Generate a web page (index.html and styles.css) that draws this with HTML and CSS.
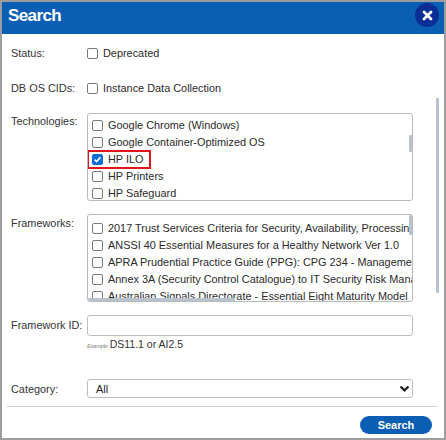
FILE: index.html
```html
<!DOCTYPE html>
<html>
<head>
<meta charset="utf-8">
<link rel="stylesheet" href="styles.css">
</head>
<body>
<div class="dialog">
  <div class="hdr">
    <div class="title">Search</div>
    <button class="close" aria-label="Close"><svg width="11" height="11" viewBox="0 0 11 11"><path d="M2 2L9 9M9 2L2 9" stroke="#fff" stroke-width="2.8" stroke-linecap="round"/></svg></button>
  </div>
  <div class="body">
    <div class="row r-status">
      <div class="lbl">Status:</div>
      <label class="chk"><span class="cb"></span>Deprecated</label>
    </div>
    <div class="row r-db">
      <div class="lbl">DB OS CIDs:</div>
      <label class="chk"><span class="cb"></span>Instance Data Collection</label>
    </div>
    <div class="row r-tech top">
      <div class="lbl">Technologies:</div>
      <div class="lst lst-tech">
        <label class="it"><span class="cb"></span>Google Chrome (Windows)</label>
        <label class="it"><span class="cb"></span>Google Container-Optimized OS</label>
        <label class="it hl"><span class="cb on"><svg width="9" height="9" viewBox="0 0 9 9"><path d="M1.6 4.6L3.6 6.6L7.5 2.2" fill="none" stroke="#fff" stroke-width="1.7"/></svg></span>HP ILO</label>
        <label class="it"><span class="cb"></span>HP Printers</label>
        <label class="it"><span class="cb"></span>HP Safeguard</label>
        <div class="thumb-v tech-thumb"></div>
      </div>
    </div>
    <div class="row r-fw top">
      <div class="lbl">Frameworks:</div>
      <div class="lst lst-fw">
        <label class="it"><span class="cb"></span>2017 Trust Services Criteria for Security, Availability, Processing Integrity, Confidentiality, and Privacy</label>
        <label class="it"><span class="cb"></span>ANSSI 40 Essential Measures for a Healthy Network Ver 1.0</label>
        <label class="it"><span class="cb"></span>APRA Prudential Practice Guide (PPG): CPG 234 - Management of Security Risk in Information and Information Technology</label>
        <label class="it"><span class="cb"></span>Annex 3A (Security Control Catalogue) to IT Security Risk Management: A Lifecycle Approach</label>
        <label class="it"><span class="cb"></span>Australian Signals Directorate - Essential Eight Maturity Model</label>
        <div class="thumb-v fw-thumb"></div>
        <div class="thumb-h"></div>
      </div>
    </div>
    <div class="row r-fid top">
      <div class="lbl">Framework ID:</div>
      <div class="inp"></div>
    </div>
    <div class="example"><span class="ex-i">Example: </span>DS11.1 or AI2.5</div>
    <div class="row r-cat">
      <div class="lbl">Category:</div>
      <div class="sel"><span>All</span><svg width="11" height="7" viewBox="0 0 11 7"><path d="M1.5 1.5L5.5 5.3L9.5 1.5" fill="none" stroke="#222" stroke-width="2.3"/></svg></div>
    </div>
  </div>
  <div class="footer"><button class="btn">Search</button></div>
  <div class="vscroll"></div>
</div>
</body>
</html>
```

FILE: styles.css
```css
html, body {
  margin: 0;
  padding: 0;
}
body {
  width: 446px;
  height: 440px;
  background: #fff;
  font-family: "Liberation Sans", Arial, sans-serif;
}
.dialog {
  position: relative;
  box-sizing: border-box;
  width: 446px;
  height: 440px;
  border: 2px solid #9d9d9d;
  background: #fff;
  display: flex;
  flex-direction: column;
}
.hdr {
  height: 32px;
  flex-shrink: 0;
  background: #0a5eb4;
  display: flex;
  align-items: flex-start;
  justify-content: space-between;
}
.title {
  color: #fff;
  font-weight: bold;
  font-size: 17px;
  letter-spacing: -0.6px;
  line-height: 28px;
  padding-left: 6px;
}
.close {
  width: 24px;
  height: 24px;
  margin: 1px 5px 0 0;
  padding: 0;
  border: none;
  border-radius: 50%;
  background: #0a2d96;
  display: flex;
  align-items: center;
  justify-content: center;
}
.body {
  padding: 0 31px 0 9px;
  font-size: 10.9px;
  color: #333;
}
.row {
  display: flex;
  align-items: center;
}
.row.top {
  align-items: flex-start;
}
.lbl {
  width: 76px;
  flex-shrink: 0;
  line-height: 14px;
  color: #333;
}
.top .lbl {
  padding-top: 1px;
}
.r-status {
  margin-top: 10px;
  height: 18px;
}
.r-db {
  margin-top: 17px;
  height: 18px;
}
.r-tech {
  margin-top: 16px;
}
.r-fw {
  margin-top: 13px;
}
.r-fw .lbl {
  padding-top: 2px;
}
.r-fid {
  margin-top: 13px;
}
.r-fid .lbl {
  padding-top: 3px;
}
.chk {
  display: flex;
  align-items: center;
  line-height: 14px;
  color: #2a2a2a;
}
.cb {
  box-sizing: border-box;
  width: 11px;
  height: 11px;
  border: 1px solid #7a7a7a;
  border-radius: 2px;
  background: #fff;
  margin-right: 5px;
  flex-shrink: 0;
  display: flex;
  align-items: center;
  justify-content: center;
}
.cb.on {
  background: #0b6cd6;
  border-color: #0b6cd6;
}
.lst {
  position: relative;
  box-sizing: border-box;
  width: 326px;
  height: 88px;
  border: 1px solid #b9b9b9;
  border-radius: 3px;
  overflow: hidden;
  padding-left: 1px;
}
.lst-tech {
  padding-top: 4px;
}
.lst-fw {
  padding-top: 6px;
}
.it {
  display: flex;
  align-items: center;
  width: max-content;
  height: 15px;
  margin-bottom: 2px;
  padding: 0 5px 0 3px;
  white-space: nowrap;
  color: #2a2a2a;
  line-height: 15px;
}
.it.hl {
  outline: 2px solid #e0141c;
}
.thumb-v {
  position: absolute;
  right: 0;
  width: 3px;
  background: #b7c4cf;
  border-radius: 1px;
}
.tech-thumb {
  top: 21px;
  height: 17px;
}
.fw-thumb {
  top: 0;
  height: 20px;
}
.thumb-h {
  position: absolute;
  left: 0;
  bottom: 0;
  width: 147px;
  height: 3px;
  background: #b7c4cf;
}
.inp {
  box-sizing: border-box;
  width: 326px;
  height: 21px;
  border: 1px solid #bdbdbd;
  border-radius: 3px;
}
.example {
  margin: 3px 0 0 76px;
  font-size: 10.5px;
  line-height: 10px;
  color: #333;
}
.ex-i {
  font-style: italic;
  font-size: 6px;
  letter-spacing: -0.45px;
  color: #8a8a8a;
}
.r-cat {
  margin-top: 28px;
}
.sel {
  box-sizing: border-box;
  width: 326px;
  height: 19px;
  border: 1px solid #bdbdbd;
  border-radius: 3px;
  display: flex;
  align-items: center;
  justify-content: space-between;
  padding: 0 2px 0 8px;
  color: #222;
}
.footer {
  margin: 8px 7px 0 5px;
  border-top: 1px solid #cfcfcf;
  display: flex;
  justify-content: flex-end;
  padding: 9px 5px 0 0;
}
.btn {
  width: 72px;
  height: 18px;
  padding: 0;
  border: none;
  border-radius: 9px;
  background: #0a5eb4;
  color: #fff;
  font-family: "Liberation Sans", Arial, sans-serif;
  font-weight: bold;
  font-size: 11px;
}
.vscroll {
  position: absolute;
  left: 434px;
  top: 96px;
  width: 3px;
  height: 195px;
  background: #b7c4cf;
  border-radius: 1px;
}
```
